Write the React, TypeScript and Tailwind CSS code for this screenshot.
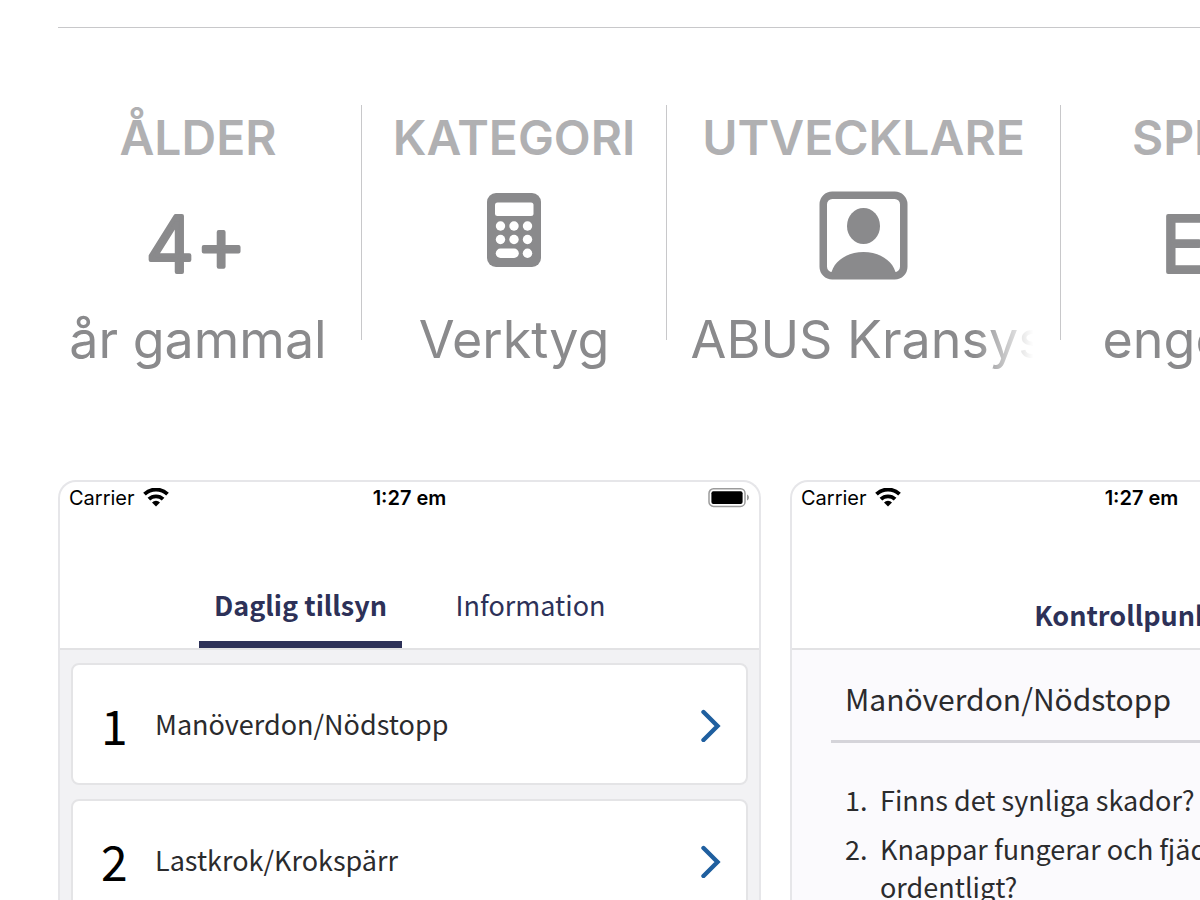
import React from "react";

const facts = [
  { id: "age", label: "ÅLDER", value: "år gammal", width: "w-[280px]" },
  { id: "category", label: "KATEGORI", value: "Verktyg", width: "w-[304px]" },
  { id: "developer", label: "UTVECKLARE", value: "ABUS Kransystem", width: "w-[393px]" },
  { id: "language", label: "SPRÅK", value: "engelska", width: "w-[304px]" },
];

const checks = [
  { id: 1, name: "Manöverdon/Nödstopp" },
  { id: 2, name: "Lastkrok/Krokspärr" },
];

const questions = [
  "Finns det synliga skador?",
  "Knappar fungerar och fjädrar tillbaka ordentligt?",
];

function CalculatorIcon() {
  return (
    <svg width="56" height="76" viewBox="0 0 56 76" aria-hidden="true">
      <rect x="1" y="2" width="54" height="74" rx="9" fill="#8a8a8c" />
      <g fill="#fff">
        <rect x="9" y="11.5" width="38.5" height="13.5" rx="2.5" />
        {[14.5, 28, 41.5].map((x) => (
          <React.Fragment key={x}>
            <circle cx={x} cy="35" r="4.7" />
            <circle cx={x} cy="48.5" r="4.7" />
          </React.Fragment>
        ))}
        <rect x="9.8" y="57.5" width="23" height="9.4" rx="4.7" />
        <circle cx="41.5" cy="62.2" r="4.7" />
      </g>
    </svg>
  );
}

function PersonIcon() {
  return (
    <svg width="90" height="90" viewBox="0 0 90 90" aria-hidden="true">
      <rect x="4.25" y="4.25" width="80.5" height="80.5" rx="9" fill="none" stroke="#8a8a8c" strokeWidth="7.5" />
      <ellipse cx="44.5" cy="35" rx="16.5" ry="18" fill="#8a8a8c" />
      <path d="M12 84C13.5 71 27.5 61 44.5 61S75.5 71 77 84Z" fill="#8a8a8c" />
    </svg>
  );
}

function WifiIcon() {
  return (
    <svg width="26" height="20" viewBox="0 0 26 20" aria-hidden="true">
      <g fill="none" stroke="#000" strokeWidth="3.8">
        <path d="M1.5 6.2A16.4 16.4 0 0 1 24.5 6.2" />
        <path d="M5.9 11.2A10.2 10.2 0 0 1 20.1 11.2" />
      </g>
      <path d="M9 14.4A5.8 5.8 0 0 1 17 14.4L13 18.5Z" />
    </svg>
  );
}

function BatteryIcon() {
  return (
    <svg width="42" height="20" viewBox="0 0 42 20" aria-hidden="true">
      <rect x="1" y="0.8" width="36" height="17.6" rx="4.5" fill="none" stroke="#9b9b9b" strokeWidth="1.5" />
      <rect x="3.4" y="3.2" width="31.2" height="12.8" rx="2" />
      <path d="M39 6.6C41.6 7.6 41.6 11.6 39 12.6Z" fill="#9b9b9b" />
    </svg>
  );
}

function Chevron() {
  return (
    <svg width="22" height="36" viewBox="0 0 22 36" aria-hidden="true">
      <path d="M3.5 6 17.5 20 3.5 34" fill="none" stroke="#1f5f9f" strokeWidth="4.4" strokeLinecap="round" />
    </svg>
  );
}

function FactSymbol({ id }: { id: string }) {
  if (id === "category") return <CalculatorIcon />;
  if (id === "developer") return <PersonIcon />;
  // stroked text gives the big letters their rounded ends
  return (
    <svg
      width="130"
      height="96"
      viewBox="0 0 130 96"
      fill="#8a8a8c"
      stroke="#8a8a8c"
      strokeWidth="4"
      strokeLinejoin="round"
      fontSize="77"
      fontWeight="300"
      textAnchor="middle"
    >
      {id === "age" ? (
        <text x="63" y="81">
          4<tspan dx="2" dy="5">+</tspan>
        </text>
      ) : (
        <text x="65" y="81">EN</text>
      )}
    </svg>
  );
}

function StatusBar() {
  return (
    <div className="grid h-7 grid-cols-3 items-center px-[9px] text-xl leading-7 text-black">
      <span className="flex items-center gap-2">
        Carrier <WifiIcon />
      </span>
      <span className="text-center font-semibold">1:27 em</span>
      <span className="flex justify-end">
        <BatteryIcon />
      </span>
    </div>
  );
}

function Phone({ header, children }: { header: React.ReactNode; children: React.ReactNode }) {
  return (
    <article className="flex w-[703px] shrink-0 flex-col overflow-hidden rounded-t-[18px] border-2 border-b-0 border-[#e6e6e9] pt-[2px]">
      <StatusBar />
      <div className="flex h-[138px] items-end justify-center border-b-2 border-[#e2e2e4] font-['Noto_Sans_CJK_SC',sans-serif] text-[27px] leading-10 text-[#2d3158]">
        {header}
      </div>
      {children}
    </article>
  );
}

export default function App() {
  return (
    <main className="h-screen overflow-hidden bg-white pl-[58px] font-['Inter',sans-serif]">
      <hr className="mt-[27px] border-t border-[#c8c8ca]" />

      <dl className="mt-[77px] flex h-[235px] divide-x divide-[#c8c8ca]">
        {facts.map((f) => (
          <div key={f.id} className={f.id === "age" ? "shrink-0 pr-[23px]" : "shrink-0"}>
            <div className={`flex flex-col items-center text-[#8a8a8c] ${f.width}`}>
              <dt className="text-5xl leading-[66px] font-semibold text-[#b0b0b2]">{f.label}</dt>
              <dd className="flex flex-col items-center">
                <div className="mt-5 flex h-24 items-start">
                  <FactSymbol id={f.id} />
                </div>
                <span
                  className={
                    f.id === "developer"
                      ? "mt-5 w-[346px] overflow-hidden text-[52px] leading-[66px] whitespace-nowrap mask-r-from-82% mask-r-to-99%"
                      : "mt-5 text-[52px] leading-[66px] whitespace-nowrap"
                  }
                >
                  {f.value}
                </span>
              </dd>
            </div>
          </div>
        ))}
      </dl>

      <section className="mt-[140px] flex gap-[29px]">
        <Phone
          header={
            <nav className="flex gap-[27px] pl-3">
              <button className="w-[203px] border-b-[7px] border-[#2d3158] pb-4 font-bold">
                Daglig tillsyn
              </button>
              <button className="w-[203px] border-b-[7px] border-transparent pb-4">
                Information
              </button>
            </nav>
          }
        >
          <ul className="flex flex-col gap-[14px] bg-[#f2f2f4] px-[11px] pt-[13px] pb-3 font-['Noto_Sans_CJK_SC',sans-serif]">
            {checks.map((c) => (
              <li key={c.id}>
                <button className="flex h-[122px] w-full items-center rounded-lg border-2 border-[#e4e4e6] bg-white pr-6 pl-7 text-left">
                  <span className="w-[54px] text-5xl text-black">{c.id}</span>
                  <span className="grow text-[27px] text-[#2b2b2d]">{c.name}</span>
                  <Chevron />
                </button>
              </li>
            ))}
          </ul>
        </Phone>

        <Phone header={<h2 className="pb-[13px] font-bold">Kontrollpunkter</h2>}>
          <div className="bg-[#fbfafd] px-[39px] pt-[26px] font-['Noto_Sans_CJK_SC',sans-serif] text-[#2b2b2d]">
            <h3 className="border-b-[3px] border-[#d5d4da] px-[14px] pb-5 text-[30px] leading-[44px]">
              Manöverdon/Nödstopp
            </h3>
            <ol className="mt-[38px] flex flex-col gap-[11px] px-[14px] text-[27px] leading-[38px]">
              {questions.map((q, i) => (
                <li key={q} className="flex">
                  <span className="w-[35px] shrink-0">{i + 1}.</span>
                  <span>{q}</span>
                </li>
              ))}
            </ol>
          </div>
        </Phone>
      </section>
    </main>
  );
}
